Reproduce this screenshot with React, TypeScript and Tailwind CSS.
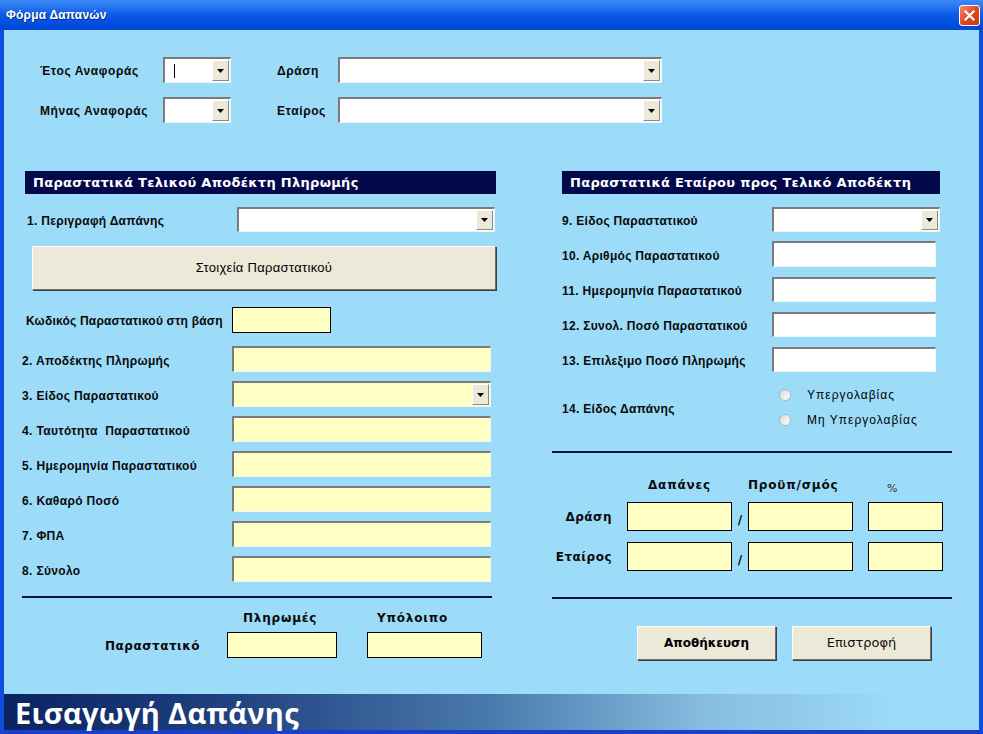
import React from "react";

const sans = "font-['Liberation_Sans',Arial,sans-serif]";
const verd = "font-['DejaVu_Sans',Verdana,sans-serif]";

function Arrow() {
  return (
    <div className="flex h-full w-[17px] shrink-0 items-center justify-center border border-t-white border-l-white border-b-[#8a8a8a] border-r-[#8a8a8a] bg-[#ece9d8]">
      <svg width="7" height="4" viewBox="0 0 7 4">
        <path d="M0 0h7L3.5 4z" fill="#000" />
      </svg>
    </div>
  );
}

function Combo({ w, h, yellow, caret }: { w: string; h: string; yellow?: boolean; caret?: boolean }) {
  return (
    <div
      className={`flex ${w} ${h} shrink-0 items-stretch border-t-2 border-l-2 border-t-[#7b7b7b] border-l-[#7b7b7b] border-b border-r border-b-[#e9f6fc] border-r-[#e9f6fc] p-[1px] ${
        yellow ? "bg-[#ffffc4]" : "bg-white"
      }`}
    >
      <div className="flex flex-1 items-center pl-[8px]">
        {caret && <div className="h-[14px] w-[1px] bg-black" />}
      </div>
      <Arrow />
    </div>
  );
}

function Field({ w, h, yellow }: { w: string; h: string; yellow?: boolean }) {
  return (
    <div
      className={`${w} ${h} shrink-0 border-t-2 border-l-2 border-t-[#7b7b7b] border-l-[#7b7b7b] border-b border-r border-b-[#e9f6fc] border-r-[#e9f6fc] ${
        yellow ? "bg-[#ffffc4]" : "bg-white"
      }`}
    />
  );
}

function Box({ w, h }: { w: string; h: string }) {
  return <div className={`${w} ${h} shrink-0 border border-black bg-[#ffffc4]`} />;
}

function Header({ children, className }: { children: React.ReactNode; className: string }) {
  return (
    <div className={`flex h-[23px] items-center bg-[#03084a] pl-[8px] text-[13px] font-bold tracking-[0.3px] text-white ${verd} ${className}`}>
      {children}
    </div>
  );
}

const leftRows = [
  { label: "2. Αποδέκτης Πληρωμής" },
  { label: "3. Είδος Παραστατικού", combo: true },
  { label: "4. Ταυτότητα  Παραστατικού" },
  { label: "5. Ημερομηνία Παραστατικού" },
  { label: "6. Καθαρό Ποσό" },
  { label: "7. ΦΠΑ" },
  { label: "8. Σύνολο" },
];

export default function App() {
  return (
    <div className={`flex h-[734px] w-[983px] flex-col overflow-hidden bg-[#0c4fdc] ${sans}`}>
      {/* title bar */}
      <div className="flex h-[30px] shrink-0 items-center justify-between bg-gradient-to-b from-[#3d8bf7] via-[#0a5ae8] to-[#0046d6] pl-[6px] pr-[3px]">
        <span className="text-[12px] font-bold tracking-[0.2px] text-white [text-shadow:1px_1px_0_#0a2a8a]">Φόρμα Δαπανών</span>
        <div className="flex h-[21px] w-[21px] items-center justify-center rounded-[3px] border border-white bg-gradient-to-br from-[#f08a68] via-[#e0471f] to-[#c83a14]">
          <svg width="11" height="11" viewBox="0 0 11 11">
            <path d="M1.5 1.5l8 8M9.5 1.5l-8 8" stroke="#fff" strokeWidth="2.2" strokeLinecap="square" />
          </svg>
        </div>
      </div>

      {/* form body */}
      <div className="flex flex-1 flex-col border-x-4 border-b-4 border-x-[#0c4fdc] border-b-[#1a3fd0] bg-[#9ddcf8] text-[12px] text-[#0a0a0a]">
        {/* top selectors */}
        <div className="mt-[27px] flex flex-col gap-[14px]">
          <div className="flex h-[26px] items-center">
            <span className="ml-[36px] w-[123px] pt-[2px] font-bold tracking-[0.6px]">Έτος Αναφοράς</span>
            <Combo w="w-[68px]" h="h-[26px]" caret />
            <span className="ml-[46px] w-[61px] pt-[2px] font-bold tracking-[0.6px]">Δράση</span>
            <Combo w="w-[324px]" h="h-[26px]" />
          </div>
          <div className="flex h-[26px] items-center">
            <span className="ml-[36px] w-[123px] pt-[2px] font-bold tracking-[0.6px]">Μήνας Αναφοράς</span>
            <Combo w="w-[68px]" h="h-[26px]" />
            <span className="ml-[46px] w-[61px] pt-[2px] font-bold tracking-[0.6px]">Εταίρος</span>
            <Combo w="w-[324px]" h="h-[26px]" />
          </div>
        </div>

        <div className="mt-[48px] flex">
          {/* left column */}
          <div className="ml-[18px] flex w-[474px] flex-col">
            <Header className="ml-[3px] w-[471px]">Παραστατικά Τελικού Αποδέκτη Πληρωμής</Header>
            <div className="mt-[13px] flex h-[25px] items-center">
              <span className="w-[215px] pl-[5px] pt-[2px] font-bold tracking-[0.3px]">1. Περιγραφή Δαπάνης</span>
              <Combo w="w-[258px]" h="h-[25px]" />
            </div>
            <button className="ml-[10px] mt-[14px] h-[44px] w-[464px] border border-t-white border-l-white border-b-[#6f6f6f] border-r-[#6f6f6f] bg-[#ece9d8] text-[13px] tracking-[0.3px] text-black shadow-[1px_1px_0_#404040]">
              Στοιχεία Παραστατικού
            </button>
            <div className="mt-[17px] flex h-[26px] items-center">
              <span className="w-[210px] shrink-0 whitespace-nowrap pl-[4px] pt-[2px] font-bold tracking-[0.2px]">Κωδικός Παραστατικού στη βάση</span>
              <Box w="w-[99px]" h="h-[26px]" />
            </div>
            <div className="mt-[13px] flex flex-col gap-[9px]">
              {leftRows.map((r) => (
                <div key={r.label} className="flex h-[26px] items-center">
                  <span className="w-[210px] whitespace-pre pt-[3px] font-bold tracking-[0.35px]">{r.label}</span>
                  {r.combo ? <Combo w="w-[259px]" h="h-[26px]" yellow /> : <Field w="w-[259px]" h="h-[26px]" yellow />}
                </div>
              ))}
            </div>
            <div className="mt-[14px] h-[2px] w-[470px] bg-[#06114f]" />
            <div className={`mt-[12px] flex h-[16px] items-center font-bold text-[12px] tracking-[0.8px] ${verd}`}>
              <span className="ml-[221px] w-[134px]">Πληρωμές</span>
              <span>Υπόλοιπο</span>
            </div>
            <div className="mt-[6px] flex h-[26px] items-center">
              <span className={`w-[178px] pt-[2px] text-right font-bold tracking-[0.5px] ${verd}`}>Παραστατικό</span>
              <div className="ml-[27px]">
                <Box w="w-[110px]" h="h-[26px]" />
              </div>
              <div className="ml-[30px]">
                <Box w="w-[115px]" h="h-[26px]" />
              </div>
            </div>
          </div>

          {/* right column */}
          <div className="ml-[56px] flex w-[400px] flex-col">
            <Header className="ml-[10px] w-[378px]">Παραστατικά Εταίρου προς Τελικό Αποδέκτη</Header>
            <div className="mt-[13px] flex h-[25px] items-center">
              <span className="w-[220px] pl-[10px] pt-[2px] font-bold tracking-[0.3px]">9. Είδος Παραστατικού</span>
              <Combo w="w-[168px]" h="h-[25px]" />
            </div>
            <div className="mt-[9px] flex h-[26px] items-center">
              <span className="w-[220px] pl-[10px] pt-[3px] font-bold tracking-[0.3px]">10. Αριθμός Παραστατικού</span>
              <Field w="w-[164px]" h="h-[26px]" />
            </div>
            {["11. Ημερομηνία Παραστατικού", "12. Συνολ. Ποσό Παραστατικού", "13. Επιλεξιμο Ποσό Πληρωμής"].map((l) => (
              <div key={l} className="mt-[10px] flex h-[25px] items-center">
                <span className="w-[220px] pl-[10px] pt-[3px] font-bold tracking-[0.3px]">{l}</span>
                <Field w="w-[164px]" h="h-[25px]" />
              </div>
            ))}
            <div className="mt-[13px] flex h-[45px] items-center">
              <span className="w-[220px] pl-[10px] pt-[2px] font-bold tracking-[0.3px]">14. Είδος Δαπάνης</span>
              <div className="flex flex-col gap-[11px]">
                {["Υπεργολαβίας", "Μη Υπεργολαβίας"].map((t) => (
                  <div key={t} className="flex h-[14px] items-center">
                    <div className="ml-[7px] h-[12px] w-[12px] rounded-full border border-[#aab8c2] bg-gradient-to-br from-[#d8d8d8] to-white" />
                    <span className="ml-[16px] tracking-[1px] text-black">{t}</span>
                  </div>
                ))}
              </div>
            </div>
            <div className="mt-[21px] h-[2px] w-[400px] bg-[#06114f]" />
            <div className={`mt-[23px] flex h-[18px] items-center font-bold text-[12px] tracking-[0.8px] ${verd}`}>
              <span className="ml-[96px] w-[100px]">Δαπάνες</span>
              <span className="w-[139px]">Προϋπ/σμός</span>
              <span className="mt-[8px] text-[11px] font-normal text-[#333]">%</span>
            </div>
            <div className="mt-[8px] flex flex-col gap-[11px]">
              {["Δράση", "Εταίρος"].map((l) => (
                <div key={l} className="flex h-[29px] items-center">
                  <span className={`w-[60px] text-right font-bold tracking-[0.5px] ${verd}`}>{l}</span>
                  <div className="ml-[15px]">
                    <Box w="w-[105px]" h="h-[29px]" />
                  </div>
                  <span className={`w-[16px] self-end pb-[2px] text-center font-bold ${verd}`}>/</span>
                  <Box w="w-[105px]" h="h-[29px]" />
                  <div className="ml-[15px]">
                    <Box w="w-[75px]" h="h-[29px]" />
                  </div>
                </div>
              ))}
            </div>
            <div className="mt-[26px] h-[2px] w-[400px] bg-[#06114f]" />
            <div className="mt-[27px] flex gap-[16px] pl-[85px]">
              <button className={`h-[34px] w-[139px] border border-t-white border-l-white border-b-[#6f6f6f] border-r-[#6f6f6f] bg-[#ece9d8] text-[12px] font-bold text-black shadow-[1px_1px_0_#404040] ${verd}`}>
                Αποθήκευση
              </button>
              <button className={`h-[34px] w-[139px] border border-t-white border-l-white border-b-[#6f6f6f] border-r-[#6f6f6f] bg-[#ece9d8] text-[13px] text-[#111] shadow-[1px_1px_0_#404040] ${verd}`}>
                Επιστροφή
              </button>
            </div>
          </div>
        </div>

        {/* bottom banner */}
        <div className="mt-auto flex h-[36px] items-center bg-[linear-gradient(to_right,#0b2461_0%,#1f3f7e_22%,#4a7aad_50%,#86bde0_72%,#9ddcf8_92%)] pl-[11px]">
          <span className="font-['Open_Sans',sans-serif] text-[29px] font-bold leading-none tracking-[0.3px] text-white">
            Εισαγωγή Δαπάνης
          </span>
        </div>
      </div>
    </div>
  );
}
